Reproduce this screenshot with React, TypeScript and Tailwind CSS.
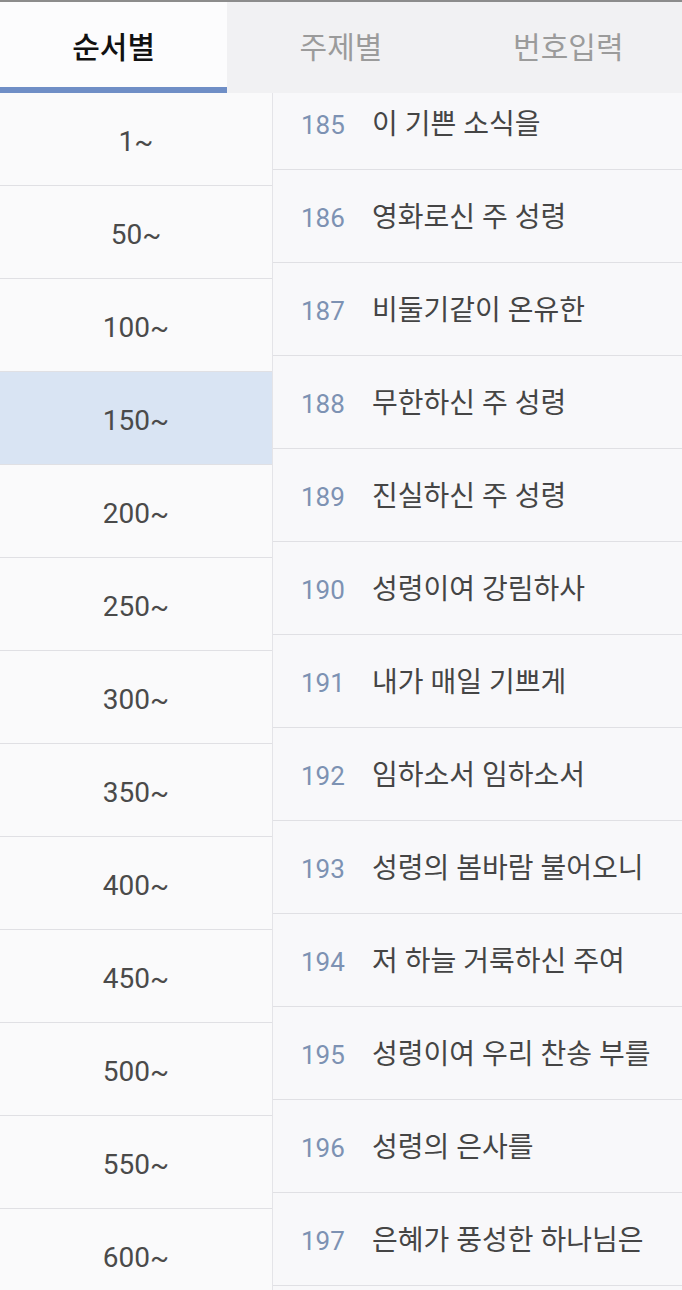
import { useState } from "react";

const tabs = ["순서별", "주제별", "번호입력"];

const ranges = [1, 50, 100, 150, 200, 250, 300, 350, 400, 450, 500, 550, 600];

const hymns: [number, string][] = [
  [185, "이 기쁜 소식을"],
  [186, "영화로신 주 성령"],
  [187, "비둘기같이 온유한"],
  [188, "무한하신 주 성령"],
  [189, "진실하신 주 성령"],
  [190, "성령이여 강림하사"],
  [191, "내가 매일 기쁘게"],
  [192, "임하소서 임하소서"],
  [193, "성령의 봄바람 불어오니"],
  [194, "저 하늘 거룩하신 주여"],
  [195, "성령이여 우리 찬송 부를"],
  [196, "성령의 은사를"],
  [197, "은혜가 풍성한 하나님은"],
];

export default function App() {
  const [tab, setTab] = useState(0);
  const [range, setRange] = useState(150);

  return (
    <div
      className="w-[682px] h-[1290px] overflow-hidden flex flex-col bg-[#f8f8fa] border-t-2 border-[#8c8c8c]"
      style={{ fontFamily: 'Roboto, "Noto Sans CJK KR", sans-serif' }}
    >
      <div className="flex h-[91px] shrink-0">
        {tabs.map((t, i) => (
          <button
            key={t}
            type="button"
            onClick={() => setTab(i)}
            className={`flex-1 flex flex-col ${i === tab ? "bg-[#fcfcfd]" : "bg-[#f1f1f3]"}`}
          >
            <span
              className={`flex-1 flex items-center justify-center text-[30px] pt-[6px] ${
                i === tab ? "text-[#111] font-medium" : "text-[#9b9b9b]"
              }`}
            >
              {t}
            </span>
            <span className={`h-[6px] w-full ${i === tab ? "bg-[#6f8ec6]" : ""}`} />
          </button>
        ))}
      </div>

      <div className="flex flex-1 min-h-0">
        <div className="w-[272px] shrink-0 flex flex-col">
          {ranges.map((r) => (
            <button
              key={r}
              type="button"
              onClick={() => setRange(r)}
              className={`h-[93px] shrink-0 flex items-center justify-center border-b border-[#e0e0e4] text-[28px] text-[#4a4a4a] pt-[5px] ${
                r === range ? "bg-[#d9e4f3]" : "bg-[#fafafb]"
              }`}
            >
              {r}~
            </button>
          ))}
        </div>

        <div className="flex-1 border-l border-[#e4e4e8] overflow-hidden">
          <div className="-mt-[16px] flex flex-col">
            {hymns.map(([n, title]) => (
              <div
                key={n}
                className="h-[93px] shrink-0 flex items-center pl-[28px] pt-[4px] border-b border-[#e0e0e4] bg-[#f8f8fa]"
              >
                <span className="w-[71px] text-[26px] text-[#7d92b3]">{n}</span>
                <span className="text-[28px] text-[#454545]">{title}</span>
              </div>
            ))}
          </div>
        </div>
      </div>
    </div>
  );
}
